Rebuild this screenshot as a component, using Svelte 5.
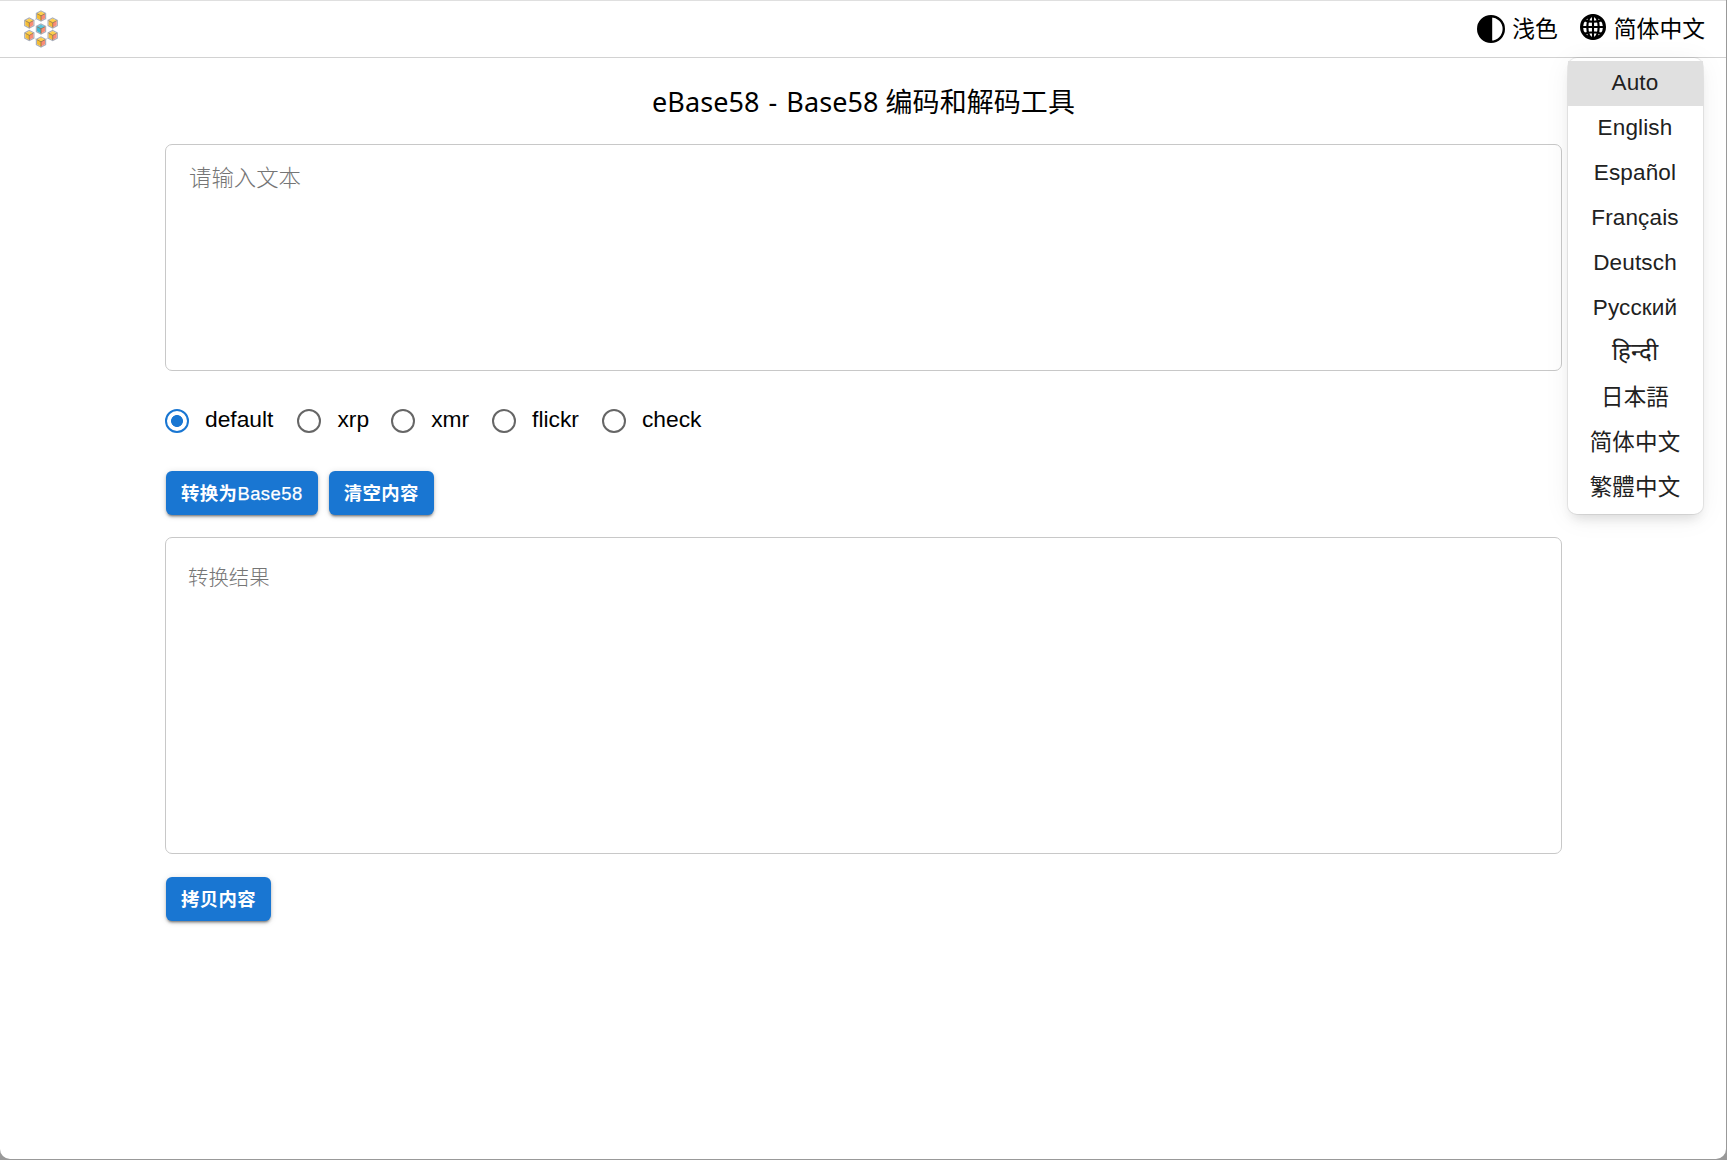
<script>
  const cubes = [
    [41, 16], [29.3, 23], [52.7, 23], [41, 29], [29.3, 35.5], [52.7, 35.5], [41, 42]
  ];
  const alphabets = ['default', 'xrp', 'xmr', 'flickr', 'check'];
  const languages = [
    ['Auto', 'en'], ['English', 'en'], ['Español', 'es'], ['Français', 'fr'], ['Deutsch', 'de'],
    ['Русский', 'ru'], ['हिन्दी', 'hi'], ['日本語', 'ja'], ['简体中文', 'zh-Hans'], ['繁體中文', 'zh-Hant']
  ];
  let alphabet = $state('default');
  let language = $state('Auto');
</script>

<div class="page">
  <header>
    <svg class="logo" width="38" height="38" viewBox="22 10 38 38" aria-hidden="true">
      <path d="M41 16 52.7 23V35.5L41 42 29.3 35.5V23Z" fill="none" stroke="#c9ccd2" stroke-dasharray="2 2" />
      {#each cubes as [x, y], i}
        <g transform="translate({x} {y})">
          <path d="M0-5 4.6-2.6V2.6L0 5-4.6 2.6V-2.6Z" fill="none" stroke="#a9aeba" stroke-width="1.2" />
          <path d="M0-4.4 4-2.3 0-.2-4-2.3Z" fill={i === 3 ? '#59c3dc' : '#ffcf4b'} />
          <path d="M-4-2.3 0-.2V4.5L-4 2.3Z" fill={i === 3 ? '#43b5cf' : '#f4bd35'} />
          <path d="M4-2.3 0-.2V4.5L4 2.3Z" fill="#fa8c76" />
          <path d="M-4-2.3 0-.2 4-2.3M0-.2V4.5" fill="none" stroke="#806840" stroke-width=".7" />
        </g>
      {/each}
    </svg>
    <nav>
      <button class="tool theme">
        <svg width="28" height="28" viewBox="0 0 28 28" aria-hidden="true">
          <circle cx="14" cy="14" r="12.8" fill="none" stroke="#000" stroke-width="2.4" />
          <path d="M15.2 1.5V26.5H14A12.5 12.5 0 0 1 14 1.5Z" />
        </svg>
        <span>浅色</span>
      </button>
      <button class="tool lang">
        <svg width="26" height="26" viewBox="0 0 26 26" aria-hidden="true">
          <g fill="none" stroke="#000">
            <circle cx="13" cy="13" r="11.5" stroke-width="3" />
            <ellipse cx="13" cy="13" rx="5.7" ry="11.6" stroke-width="2.2" />
            <path d="M13 1V25M1 13H25M4 6.2Q13 9.2 22 6.2M4 19.8Q13 16.8 22 19.8" stroke-width="2.1" />
          </g>
        </svg>
        <span>简体中文</span>
      </button>
      <ul class="menu">
        {#each languages as [name, code]}
          <li lang={code} class:selected={language === name}>
            <button onclick={() => (language = name)}>{name}</button>
          </li>
        {/each}
      </ul>
    </nav>
  </header>

  <main>
    <h1>eBase58 <span>-</span> Base58 编码和解码工具</h1>
    <textarea class="source" placeholder="请输入文本"></textarea>
    <div class="radios">
      {#each alphabets as name}
        <label>
          <input type="radio" value={name} bind:group={alphabet} />
          <span>{name}</span>
        </label>
      {/each}
    </div>
    <div class="actions">
      <button class="primary">转换为<span>Base58</span></button>
      <button class="primary">清空内容</button>
    </div>
    <textarea class="result" placeholder="转换结果" readonly></textarea>
    <div class="actions copy">
      <button class="primary">拷贝内容</button>
    </div>
  </main>
</div>

<style>
  :global(body) { background: #999; }
  * { box-sizing: border-box; }
  .page {
    height: 1159px;
    width: 1726px;
    background: #fff;
    border-radius: 0 0 10px 10px;
    font-family: "Liberation Sans", "Noto Sans CJK SC", sans-serif;
    color: #000;
  }
  button { font: inherit; color: inherit; border: 0; background: none; padding: 0; }
  header {
    height: 58px;
    border-top: 1px solid #dfdfdf;
    border-bottom: 1px solid #d2d2d2;
    display: flex;
    justify-content: space-between;
    padding: 0 21px 0 22px;
  }
  .logo { margin-top: 9px; }
  nav { position: relative; display: flex; align-items: center; gap: 22px; }
  .tool { display: flex; align-items: center; font: 22.8px/32px "Noto Sans CJK SC", sans-serif; }
  .tool span { padding-bottom: 2px; }
  .theme { gap: 7px; }
  .lang { gap: 8px; }
  .lang svg { margin-bottom: 4px; }
  .menu {
    position: absolute;
    z-index: 2;
    top: 57px;
    right: 2px;
    width: 135px;
    margin: 0;
    padding: 3px 0;
    list-style: none;
    background: #fff;
    border-radius: 9px;
    box-shadow: 0 0 0 1px rgba(0, 0, 0, .07), 0 8px 12px -4px rgba(0, 0, 0, .12), 0 4px 28px rgba(0, 0, 0, .06);
  }
  .menu button {
    display: block;
    width: 100%;
    height: 45px;
    padding-right: 1px;
    font: 22.5px/43px "Liberation Sans", "Noto Sans CJK SC", sans-serif;
    padding-bottom: 2px;
    letter-spacing: .15px;
    color: #212121;
    text-align: center;
  }
  .menu li:lang(hi) button { font-size: 24px; line-height: 41px; padding-bottom: 4px; }
  .selected { background: #e0e0e0; }
  main { padding: 0 164px 0 165px; display: flex; flex-direction: column; }
  h1 {
    margin: 24px 0 22px;
    font: 400 27px/40px "Noto Sans", "Noto Sans CJK SC", sans-serif;
    letter-spacing: .06px;
    text-align: center;
    white-space: nowrap;
  }
  h1 span { margin: 0 2px; }
  textarea {
    display: block;
    width: 100%;
    border: 1px solid #c8c8c8;
    border-radius: 7px;
    background: #fff;
    resize: none;
    outline: 0;
  }
  textarea::placeholder { color: #757575; opacity: 1; }
  .source { height: 227px; padding: 15px 23px; font: 300 22.4px/32px "Noto Sans CJK SC", sans-serif; }
  .result { height: 317px; padding: 22px 22px; font: 300 20.4px/32px "Noto Sans CJK SC", sans-serif; }
  .radios { display: flex; gap: 23px; margin-top: 32px; height: 36px; }
  label { display: flex; align-items: center; gap: 16px; font-size: 22.8px; line-height: 34px; }
  label:first-child { padding-right: 1px; }
  label:nth-child(2) { margin-right: -1px; }
  label span { padding-bottom: 4px; }
  input {
    appearance: none;
    width: 24px;
    height: 24px;
    margin: 0;
    border: 2px solid #666;
    border-radius: 50%;
  }
  input:checked { border-color: #1976d2; background: radial-gradient(circle, #1976d2 5.6px, transparent 6.3px); }
  .actions { display: flex; gap: 11px; padding-left: 1px; margin: 32px 0 22px; }
  .copy { margin-top: 23px; }
  .primary {
    height: 44px;
    padding: 0 15px;
    border-radius: 6px;
    background: #1976d2;
    color: #fff;
    font: 700 18.4px/42px "Noto Sans CJK SC", sans-serif;
    letter-spacing: .4px;
    padding-bottom: 2px;
    box-shadow: 0 3px 2px -2px rgba(0, 0, 0, .3), 0 2px 3px rgba(0, 0, 0, .24), 0 1px 7px rgba(0, 0, 0, .12);
  }
  .primary span { font-family: "Liberation Sans", sans-serif; font-weight: 400; letter-spacing: .5px; -webkit-text-stroke: .25px #fff; }
</style>
